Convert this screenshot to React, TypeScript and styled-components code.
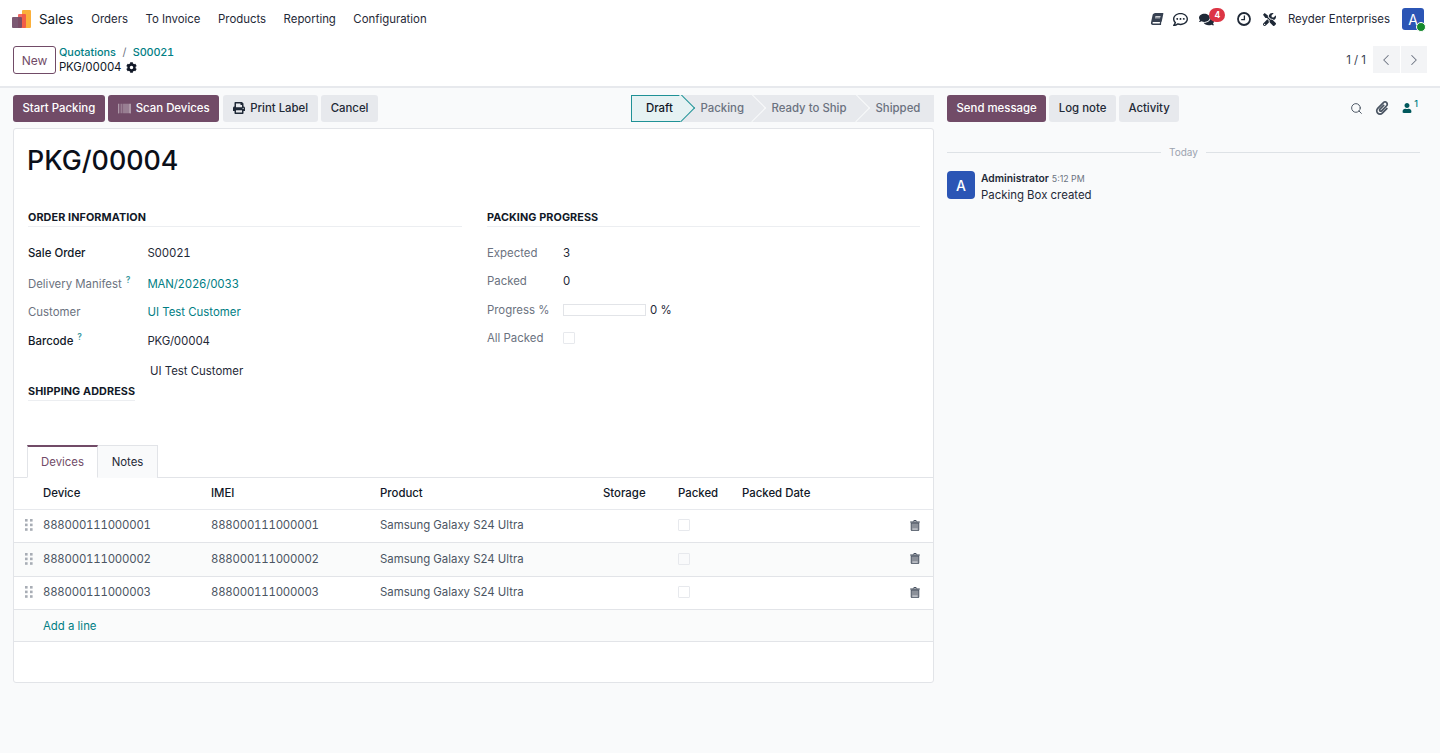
import { createGlobalStyle, styled } from "styled-components";
import {
  FaBook,
  FaRegCommentDots,
  FaComments,
  FaTools,
  FaCog,
  FaPrint,
  FaBarcode,
  FaPaperclip,
  FaUser,
} from "react-icons/fa";
import { ChevronLeft, ChevronRight, Search } from "lucide-react";

const GlobalStyle = createGlobalStyle`
  html, body {
    margin: 0;
    padding: 0;
    height: 100%;
    background: #f9fafb;
    font-family: Inter, "Noto Sans", sans-serif;
    font-size: 11.4px;
    color: #374151;
  }
  * {
    box-sizing: border-box;
  }
`;

const Page = styled.div`
  height: 753px;
  overflow: hidden;
  display: flex;
  flex-direction: column;
`;

const Navbar = styled.nav`
  height: 38px;
  background: #fff;
  display: flex;
  align-items: center;
  padding: 0 16px 0 12px;
`;

const AppName = styled.span`
  font-size: 13.4px;
  color: #111827;
  margin-left: 8px;
  margin-right: 18px;
`;

const MenuItem = styled.span`
  color: #1f2937;
  margin-right: 17.5px;
`;

const Systray = styled.div`
  margin-left: auto;
  display: flex;
  align-items: center;
  color: #1f2937;
`;

const TrayIcon = styled.span<{ $gap: number }>`
  position: relative;
  display: flex;
  margin-right: ${(p) => p.$gap}px;
  font-size: 14px;
`;

const SlantedBook = styled(FaBook)`
  transform: skewX(-12deg);
  color: #374151;
`;

const Badge = styled.span`
  position: absolute;
  top: -4px;
  left: 10px;
  width: 16px;
  height: 14px;
  border-radius: 8px;
  background: #dc3545;
  color: #fff;
  font-size: 8.5px;
  font-weight: 700;
  display: flex;
  align-items: center;
  justify-content: center;
`;

const Company = styled.span`
  color: #1f2937;
  margin-right: 12px;
`;

const UserAvatar = styled.span`
  position: relative;
  width: 22px;
  height: 22px;
  border-radius: 3px;
  background: #2b55b5;
  color: #fff;
  font-size: 14px;
  display: flex;
  align-items: center;
  justify-content: center;
`;

const OnlineDot = styled.span`
  position: absolute;
  right: -2px;
  bottom: -2px;
  width: 10px;
  height: 10px;
  border-radius: 50%;
  background: #14892c;
  border: 1px solid #fff;
`;

const ControlPanel = styled.div`
  height: 50px;
  background: #fff;
  border-bottom: 2px solid #e7e9ed;
  display: flex;
  align-items: flex-start;
  padding: 7px 13px 0;
`;

const NewButton = styled.button`
  width: 43px;
  height: 28px;
  margin-top: 1px;
  background: #fff;
  border: 1px solid #714b67;
  border-radius: 3px;
  color: #714b67;
  font: inherit;
  font-size: 12px;
  padding: 0;
`;

const Crumbs = styled.div`
  margin-left: 3px;
  display: flex;
  flex-direction: column;
  line-height: 15px;
`;

const CrumbLinks = styled.div`
  font-size: 10.9px;
  font-weight: 500;
  color: #017e84;
  display: flex;
  gap: 6.5px;
`;

const CrumbSep = styled.span`
  color: #6b7280;
  font-weight: 400;
`;

const CrumbCurrent = styled.div`
  color: #111827;
  display: flex;
  align-items: center;
  gap: 5px;
`;

const Code = styled.span`
  font-variant-numeric: tabular-nums;
  letter-spacing: -0.2px;
`;

const Pager = styled.div`
  margin-left: auto;
  display: flex;
  align-items: center;
  margin-top: 1px;
  color: #374151;
`;

const PagerText = styled.span`
  margin-right: 7px;
`;

const PagerButton = styled.span`
  width: 26.5px;
  height: 27px;
  background: #f3f4f6;
  color: #6b7280;
  display: flex;
  align-items: center;
  justify-content: center;
  & + & {
    margin-left: 1px;
  }
`;

const Body = styled.div`
  flex: 1;
  display: flex;
  padding: 6px 20px 0 13px;
  gap: 13px;
`;

const Main = styled.div`
  width: 921px;
  display: flex;
  flex-direction: column;
`;

const ButtonRow = styled.div`
  height: 28px;
  display: flex;
  align-items: center;
  gap: 3.5px;
`;

const Btn = styled.button<{ $primary?: boolean }>`
  height: 27px;
  padding: 0 9.5px;
  border: none;
  border-radius: 3px;
  font: inherit;
  font-weight: 500;
  white-space: nowrap;
  background: ${(p) => (p.$primary ? "#714b67" : "#e7e9ed")};
  color: ${(p) => (p.$primary ? "#fff" : "#1f2937")};
  display: flex;
  align-items: center;
  gap: 5px;
`;

const PrintBtn = styled(Btn)`
  padding-left: 10.5px;
`;

const StatusBar = styled.div`
  margin-left: auto;
  display: flex;
  height: 27px;
  overflow: hidden;
`;

const Step = styled.span<{ $width: number; $level: number; $active?: boolean; $last?: boolean }>`
  position: relative;
  width: ${(p) => p.$width}px;
  flex: none;
  display: flex;
  align-items: center;
  padding-left: ${(p) => (p.$active ? 14 : 19.5)}px;
  font-weight: 500;
  z-index: ${(p) => p.$level};
  background: ${(p) => (p.$active ? "#e6f2f3" : "#e7e9ed")};
  color: ${(p) => (p.$active ? "#111827" : "#6b7280")};
  ${(p) =>
    p.$active
      ? `
    border: 1px solid #1f9196;
    border-right: none;
    `
      : ""}
  &::after {
    content: "";
    display: ${(p) => (p.$last ? "none" : "block")};
    position: absolute;
    top: 50%;
    right: -9.5px;
    width: 19px;
    height: 19px;
    transform: translateY(-50%) rotate(45deg);
    background: ${(p) => (p.$active ? "#e6f2f3" : "#e7e9ed")};
    border-top: 1px solid ${(p) => (p.$active ? "#1f9196" : "#f9fafb")};
    border-right: 1px solid ${(p) => (p.$active ? "#1f9196" : "#f9fafb")};
    z-index: 1;
  }
  & > span {
    position: relative;
    z-index: 2;
  }
`;

const Sheet = styled.div`
  margin-top: 6px;
  height: 555px;
  background: #fff;
  border: 1px solid #e2e4e8;
  border-radius: 3px;
  display: flex;
  flex-direction: column;
`;

const Title = styled.h1`
  margin: 13px 0 0 13px;
  font-size: 26.8px;
  line-height: 36px;
  font-weight: 500;
  color: #0b0f19;
`;

const Groups = styled.div`
  display: grid;
  grid-template-columns: 434px 433px;
  column-gap: 25px;
  margin: 32px 0 0 14px;
  height: 235px;
`;

const SectionTitle = styled.div<{ $shrink?: boolean }>`
  font-size: 10.8px;
  font-weight: 700;
  letter-spacing: 0.1px;
  line-height: 15px;
  color: #111827;
  padding-bottom: 1px;
  border-bottom: 1px solid #eceef1;
  width: ${(p) => (p.$shrink ? "fit-content" : "auto")};
`;

const FieldRow = styled.div<{ $labelWidth: number; $height: number }>`
  display: grid;
  grid-template-columns: ${(p) => p.$labelWidth}px 1fr;
  align-items: start;
  line-height: 16px;
  height: ${(p) => p.$height}px;
`;

const Label = styled.span<{ $strong?: boolean }>`
  color: ${(p) => (p.$strong ? "#111827" : "#6b7280")};
  font-weight: ${(p) => (p.$strong ? 500 : 400)};
`;

const Help = styled.sup`
  color: #3d9aa0;
  font-size: 8.5px;
  font-weight: 600;
  margin-left: 4px;
  line-height: 0;
`;

const Value = styled.span`
  color: #1f2937;
  display: flex;
  align-items: center;
  height: 16px;
`;

const LinkValue = styled.span`
  color: #017e84;
`;

const FieldList = styled.div`
  margin-top: 18px;
`;

const Address = styled.div`
  padding-left: 122px;
  color: #1f2937;
  height: 18px;
  line-height: 18px;
  margin-bottom: 4px;
`;

const ProgressBar = styled.span`
  width: 83px;
  height: 12px;
  background: #fff;
  border: 1px solid #e2e4e8;
  margin-right: 4px;
`;

const CheckBox = styled.span<{ $muted?: boolean }>`
  display: block;
  width: 12px;
  height: 12px;
  border: 1px solid #e7e9ed;
  border-radius: 1px;
  background: ${(p) => (p.$muted ? "#f9fafb" : "#fff")};
`;

const Tabs = styled.div`
  display: flex;
  padding-left: 13px;
  height: 33px;
  border-bottom: 1px solid #e2e4e8;
`;

const Tab = styled.span<{ $active?: boolean }>`
  width: ${(p) => (p.$active ? 71 : 60)}px;
  height: 33px;
  display: flex;
  align-items: center;
  justify-content: center;
  border: 1px solid #e2e4e8;
  border-left-width: ${(p) => (p.$active ? 1 : 0)}px;
  border-top: ${(p) => (p.$active ? "2px solid #714b67" : "1px solid #e2e4e8")};
  border-bottom: ${(p) => (p.$active ? "1px solid #fff" : "none")};
  background: ${(p) => (p.$active ? "#fff" : "#f9fafb")};
  color: ${(p) => (p.$active ? "#714b67" : "#1f2937")};
`;

const Table = styled.table`
  width: 100%;
  border-collapse: collapse;
  table-layout: fixed;
`;

const Th = styled.th<{ $width?: number }>`
  width: ${(p) => (p.$width ? `${p.$width}px` : "auto")};
  height: 31px;
  padding: 0;
  text-align: left;
  font-weight: 500;
  color: #111827;
  border-bottom: 1px solid #e7e9ed;
`;

const Tr = styled.tr<{ $odd?: boolean }>`
  height: 33.6px;
  background: ${(p) => (p.$odd ? "#fafbfb" : "#fff")};
  border-bottom: 1px solid #e2e4e8;
`;

const Td = styled.td`
  padding: 0 0 1.5px;
  color: #4b5563;
`;

const AddLine = styled.td`
  height: 32px;
  padding: 0 0 0 29px;
  color: #017e84;
`;

const AddLineRow = styled.tr`
  background: #fafbfb;
  border-bottom: 1px solid #e2e4e8;
`;

const HandleCell = styled.span`
  display: flex;
  justify-content: center;
`;

const TrashCell = styled.span`
  display: flex;
  justify-content: flex-end;
  padding-right: 13px;
`;

const Chatter = styled.aside`
  flex: 1;
  display: flex;
  flex-direction: column;
`;

const ChatterTop = styled.div`
  height: 28px;
  display: flex;
  align-items: center;
  gap: 3px;
`;

const ChatterTools = styled.div`
  margin-left: auto;
  display: flex;
  align-items: center;
  gap: 13.5px;
  padding-right: 2px;
  color: #4b5563;
  font-size: 13px;
`;

const SearchIcon = styled(Search)`
  margin-right: -2px;
`;

const Followers = styled.span`
  position: relative;
  display: flex;
  color: #01585c;
  font-size: 10px;
  padding-right: 6px;
`;

const FollowerCount = styled.span`
  position: absolute;
  top: -5px;
  right: 0;
  font-size: 9px;
  font-weight: 500;
  color: #017e84;
`;

const DayLine = styled.div`
  margin-top: 24px;
  display: flex;
  align-items: center;
  gap: 8px;
  color: #9ca3af;
  font-size: 10px;
  &::before,
  &::after {
    content: "";
    flex: 1;
    height: 1px;
    background: #dee2e6;
  }
`;

const Message = styled.div`
  margin-top: 13px;
  display: flex;
  gap: 6px;
`;

const MsgAvatar = styled.span`
  width: 28px;
  height: 28px;
  border-radius: 4px;
  background: #2b55b5;
  color: #fff;
  font-size: 14px;
  font-weight: 500;
  display: flex;
  align-items: center;
  justify-content: center;
`;

const MsgHead = styled.div`
  display: flex;
  align-items: baseline;
  gap: 3px;
  line-height: 15px;
`;

const MsgAuthor = styled.span`
  font-size: 10.3px;
  font-weight: 600;
  color: #1f2937;
`;

const MsgTime = styled.span`
  font-size: 8.8px;
  color: #6b7280;
`;

const MsgBody = styled.div`
  color: #1f2937;
  margin-top: 1px;
  line-height: 16px;
`;

const Logo = () => (
  <svg width="19" height="18" viewBox="0 0 19 18">
    <rect x="10" y="0" width="9" height="18" rx="1" fill="#fbb03b" />
    <rect x="6" y="4" width="8" height="14" rx="1" fill="#f0504a" opacity="0.85" />
    <rect x="0" y="7" width="10" height="11" rx="1" fill="#714b67" opacity="0.92" />
  </svg>
);

const Handle = () => (
  <svg width="8" height="12" viewBox="0 0 8 12" fill="#a8adb5">
    <rect x="0" y="0" width="2.6" height="2.6" />
    <rect x="5" y="0" width="2.6" height="2.6" />
    <rect x="0" y="4.6" width="2.6" height="2.6" />
    <rect x="5" y="4.6" width="2.6" height="2.6" />
    <rect x="0" y="9.2" width="2.6" height="2.6" />
    <rect x="5" y="9.2" width="2.6" height="2.6" />
  </svg>
);

const ClockIcon = () => (
  <svg width="14" height="14" viewBox="0 0 14 14" fill="none" stroke="#1f2937">
    <circle cx="7" cy="7" r="6" strokeWidth="1.8" />
    <path d="M7.4 3.4V7.6H4.2" strokeWidth="1.3" />
  </svg>
);

const TrashIcon = () => (
  <svg width="10" height="11" viewBox="0 0 10 11">
    <path d="M3.4 1.5 L3.9 0.5 H6.1 L6.6 1.5" fill="none" stroke="#374151" strokeWidth="0.9" />
    <rect x="0.2" y="1.5" width="9.6" height="1.1" fill="#374151" />
    <path d="M1.2 3 H8.8 V10 Q8.8 10.8 8 10.8 H2 Q1.2 10.8 1.2 10 Z" fill="#8b9099" stroke="#374151" strokeWidth="0.8" />
    <rect x="2.4" y="8.6" width="5.2" height="0.9" fill="#e5e7eb" />
  </svg>
);

const devices = ["888000111000001", "888000111000002", "888000111000003"];

export default function App() {
  return (
    <Page>
      <GlobalStyle />
      <Navbar>
        <Logo />
        <AppName>Sales</AppName>
        <MenuItem>Orders</MenuItem>
        <MenuItem>To Invoice</MenuItem>
        <MenuItem>Products</MenuItem>
        <MenuItem>Reporting</MenuItem>
        <MenuItem>Configuration</MenuItem>
        <Systray>
          <TrayIcon $gap={10.5}><SlantedBook size={12} /></TrayIcon>
          <TrayIcon $gap={11}><FaRegCommentDots size={15} /></TrayIcon>
          <TrayIcon $gap={23}>
            <FaComments size={15} />
            <Badge>4</Badge>
          </TrayIcon>
          <TrayIcon $gap={11.5}><ClockIcon /></TrayIcon>
          <TrayIcon $gap={12}><FaTools size={13} /></TrayIcon>
          <Company>Reyder Enterprises</Company>
          <UserAvatar>
            A
            <OnlineDot />
          </UserAvatar>
        </Systray>
      </Navbar>
      <ControlPanel>
        <NewButton>New</NewButton>
        <Crumbs>
          <CrumbLinks>
            <span>Quotations</span>
            <CrumbSep>/</CrumbSep>
            <Code>S00021</Code>
          </CrumbLinks>
          <CrumbCurrent>
            <Code>PKG/00004</Code> <FaCog size={11} color="#111827" />
          </CrumbCurrent>
        </Crumbs>
        <Pager>
          <PagerText>1 / 1</PagerText>
          <PagerButton><ChevronLeft size={18} strokeWidth={1.4} /></PagerButton>
          <PagerButton><ChevronRight size={18} strokeWidth={1.4} /></PagerButton>
        </Pager>
      </ControlPanel>
      <Body>
        <Main>
          <ButtonRow>
            <Btn $primary>Start Packing</Btn>
            <Btn $primary>
              <FaBarcode size={13} color="#c9bcc6" /> Scan Devices
            </Btn>
            <PrintBtn><FaPrint size={12} /> Print Label</PrintBtn>
            <Btn>Cancel</Btn>
            <StatusBar>
              <Step $width={50} $level={4} $active><span>Draft</span></Step>
              <Step $width={71} $level={3}><span>Packing</span></Step>
              <Step $width={104} $level={2}><span>Ready to Ship</span></Step>
              <Step $width={78} $level={1} $last><span>Shipped</span></Step>
            </StatusBar>
          </ButtonRow>
          <Sheet>
            <Title>PKG/00004</Title>
            <Groups>
              <div>
                <SectionTitle>ORDER INFORMATION</SectionTitle>
                <FieldList>
                  <FieldRow $labelWidth={119.5} $height={31}>
                    <Label $strong>Sale Order</Label>
                    <Value><Code>S00021</Code></Value>
                  </FieldRow>
                  <FieldRow $labelWidth={119.5} $height={28}>
                    <Label>Delivery Manifest<Help>?</Help></Label>
                    <LinkValue><Code>MAN/2026/0033</Code></LinkValue>
                  </FieldRow>
                  <FieldRow $labelWidth={119.5} $height={29}>
                    <Label>Customer</Label>
                    <LinkValue>UI Test Customer</LinkValue>
                  </FieldRow>
                  <FieldRow $labelWidth={119.5} $height={29}>
                    <Label $strong>Barcode<Help>?</Help></Label>
                    <Value><Code>PKG/00004</Code></Value>
                  </FieldRow>
                </FieldList>
                <Address>UI Test Customer</Address>
                <SectionTitle $shrink>SHIPPING ADDRESS</SectionTitle>
              </div>
              <div>
                <SectionTitle>PACKING PROGRESS</SectionTitle>
                <FieldList>
                  <FieldRow $labelWidth={76} $height={28}>
                    <Label>Expected</Label>
                    <Value>3</Value>
                  </FieldRow>
                  <FieldRow $labelWidth={76} $height={29}>
                    <Label>Packed</Label>
                    <Value>0</Value>
                  </FieldRow>
                  <FieldRow $labelWidth={76} $height={28}>
                    <Label>Progress %</Label>
                    <Value><ProgressBar /> 0 %</Value>
                  </FieldRow>
                  <FieldRow $labelWidth={76} $height={28}>
                    <Label>All Packed</Label>
                    <Value><CheckBox /></Value>
                  </FieldRow>
                </FieldList>
              </div>
            </Groups>
            <Tabs>
              <Tab $active>Devices</Tab>
              <Tab>Notes</Tab>
            </Tabs>
            <Table>
              <thead>
                <tr>
                  <Th $width={29} />
                  <Th $width={168}>Device</Th>
                  <Th $width={169}>IMEI</Th>
                  <Th $width={223}>Product</Th>
                  <Th $width={75}>Storage</Th>
                  <Th $width={64}>Packed</Th>
                  <Th>Packed Date</Th>
                  <Th $width={36} />
                </tr>
              </thead>
              <tbody>
                {devices.map((imei, i) => (
                  <Tr key={imei} $odd={i === 1}>
                    <Td><HandleCell><Handle /></HandleCell></Td>
                    <Td><Code>{imei}</Code></Td>
                    <Td><Code>{imei}</Code></Td>
                    <Td>Samsung Galaxy S24 Ultra</Td>
                    <Td />
                    <Td><CheckBox $muted={i === 1} /></Td>
                    <Td />
                    <Td><TrashCell><TrashIcon /></TrashCell></Td>
                  </Tr>
                ))}
                <AddLineRow>
                  <AddLine colSpan={8}>Add a line</AddLine>
                </AddLineRow>
              </tbody>
            </Table>
          </Sheet>
        </Main>
        <Chatter>
          <ChatterTop>
            <Btn $primary>Send message</Btn>
            <Btn>Log note</Btn>
            <Btn>Activity</Btn>
            <ChatterTools>
              <SearchIcon size={13} strokeWidth={1.8} />
              <FaPaperclip size={14} />
              <Followers>
                <FaUser />
                <FollowerCount>1</FollowerCount>
              </Followers>
            </ChatterTools>
          </ChatterTop>
          <DayLine>Today</DayLine>
          <Message>
            <MsgAvatar>A</MsgAvatar>
            <div>
              <MsgHead>
                <MsgAuthor>Administrator</MsgAuthor>
                <MsgTime>5:12 PM</MsgTime>
              </MsgHead>
              <MsgBody>Packing Box created</MsgBody>
            </div>
          </Message>
        </Chatter>
      </Body>
    </Page>
  );
}
